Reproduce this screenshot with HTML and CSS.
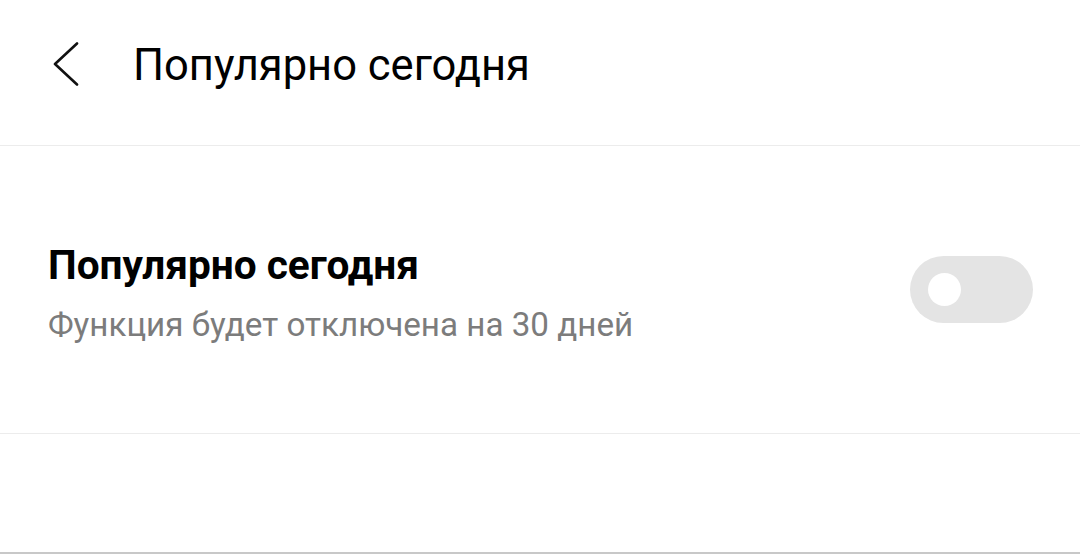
FILE: index.html
```html
<!DOCTYPE html>
<html lang="ru">
<head>
    <meta charset="UTF-8">
    <meta name="viewport" content="width=device-width, initial-scale=1.0">
    <title>Популярно сегодня</title>
    <link rel="stylesheet" href="styles.css">
</head>
<body>

    <!-- шапка -->
    <div class="header">
        <button class="back" aria-label="Назад">
            <svg width="30" height="44" viewBox="0 0 30 44">
                <polyline points="27,1.5 5,22 27,42.5" fill="none" stroke="#111" stroke-width="2.6" stroke-linecap="round" stroke-linejoin="round"/>
            </svg>
        </button>
        <h1 class="title">Популярно сегодня</h1>
    </div>

    <!-- настройка -->
    <div class="setting">
        <div class="setting-text">
            <h2>Популярно сегодня</h2>
            <p>Функция будет отключена на 30 дней</p>
        </div>
        <div class="toggle"><span class="knob"></span></div>
    </div>

    <div class="footer"></div>

</body>
</html>
```

FILE: styles.css
```css
body {
    font-family: Roboto, "Noto Sans", Arial, sans-serif;
    margin: 0;
    background-color: #fff;
    color: #000;
    height: 554px;
    display: flex;
    flex-direction: column;
}
.header {
    height: 146px;
    display: flex;
    align-items: flex-start;
    border-bottom: 1px solid #ececec;
    box-sizing: border-box;
    padding: 40px 0 0 50px;
}
.back {
    background: none;
    border: none;
    padding: 0;
    width: 83px;
    height: 44px;
    margin-top: 2px;
    display: flex;
    align-items: center;
    cursor: pointer;
}
.title {
    margin: 0;
    font-size: 43.5px;
    line-height: 52px;
    font-weight: 400;
}
.setting {
    height: 288px;
    display: flex;
    align-items: center;
    justify-content: space-between;
    padding: 0 47px 0 48px;
    border-bottom: 1px solid #ececec;
    box-sizing: border-box;
}
.setting-text {
    padding-top: 6px;
}
.setting-text h2 {
    margin: 0;
    font-size: 40.6px;
    line-height: 48px;
    font-weight: 700;
}
.setting-text p {
    margin: 16px 0 0;
    font-size: 33.2px;
    line-height: 40px;
    color: #7c7c7c;
}
.toggle {
    width: 123px;
    height: 67px;
    border-radius: 34px;
    background-color: #e4e4e4;
    display: flex;
    align-items: center;
    padding-left: 18px;
    box-sizing: border-box;
}
.knob {
    width: 33px;
    height: 33px;
    border-radius: 50%;
    background-color: #fff;
}
.footer {
    flex: 1;
    border-bottom: 2px solid #c8c8c8;
}
```
